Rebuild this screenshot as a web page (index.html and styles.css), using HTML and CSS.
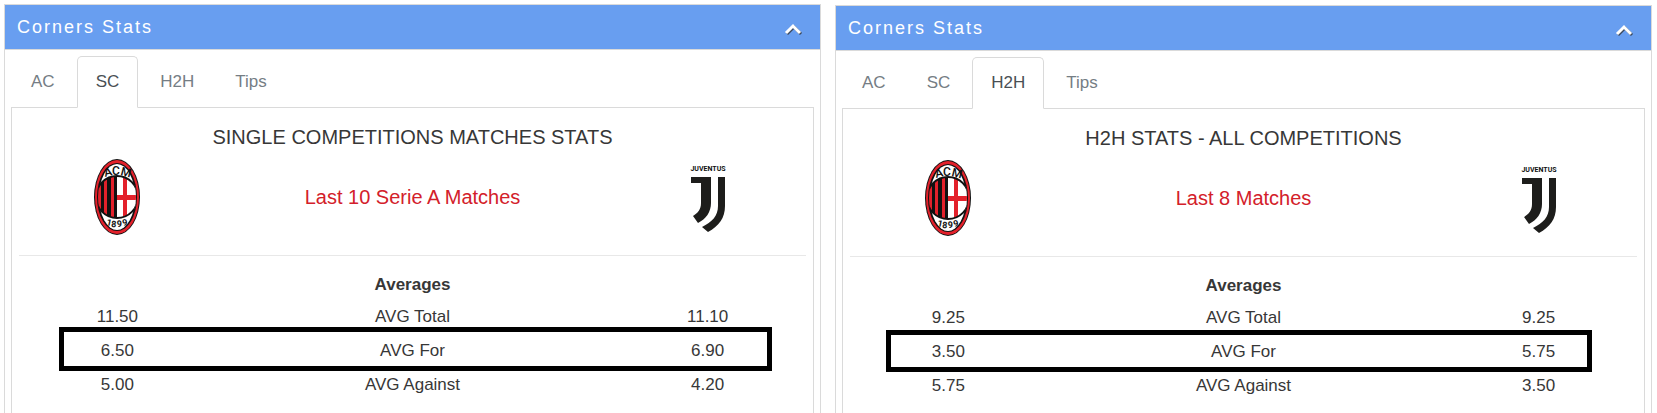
FILE: index.html
```
<!DOCTYPE html>
<html lang="en">
<head>
    <meta charset="UTF-8">
    <meta name="viewport" content="width=device-width, initial-scale=1.0">
    <title>Corners Stats</title>
    <link rel="stylesheet" href="styles.css">
</head>
<body>
    <main class="panels">
        <section class="panel">
            <header class="panel-header">
                <h2 class="panel-title">Corners Stats</h2>
                <button class="toggle" type="button" aria-label="Collapse">
                    <svg class="chevron" viewBox="0 0 20 14"><path class="chevron-shadow" d="M4 12L11 5L18 12"/><path d="M3 11L10 4L17 11"/></svg>
                </button>
            </header>
            <div class="panel-body">
                <nav class="tabs" role="tablist">
                    <button class="tab" type="button" role="tab">AC</button>
                    <button class="tab active" type="button" role="tab" aria-selected="true">SC</button>
                    <button class="tab" type="button" role="tab">H2H</button>
                    <button class="tab" type="button" role="tab">Tips</button>
                </nav>
                <div class="tab-content">
                    <h3 class="stats-title">SINGLE COMPETITIONS MATCHES STATS</h3>
                    <div class="teams">
                        <svg class="logo" viewBox="0 0 48 78" role="img" aria-label="AC Milan">
                            <clipPath id="shield"><ellipse cx="24" cy="39" rx="19" ry="34"/></clipPath>
                            <clipPath id="ball"><circle cx="24" cy="39" r="21"/></clipPath>
                            <g id="milan">
                                <ellipse cx="24" cy="39" rx="23" ry="38" fill="#111"/>
                                <ellipse cx="24" cy="39" rx="22" ry="37" fill="#e3212b"/>
                                <ellipse cx="24" cy="39" rx="20" ry="34" fill="#111"/>
                                <ellipse cx="24" cy="39" rx="18" ry="33" fill="#fff"/>
                                <g clip-path="url(#shield)">
                                    <g clip-path="url(#ball)">
                                        <rect x="4" y="18" width="20" height="42" fill="#e3212b"/>
                                        <path d="M8 18h3v42h-3zM14 18h4v42h-4zM21 18h3v42h-3z" fill="#111"/>
                                        <rect x="24" y="18" width="20" height="42" fill="#fff"/>
                                        <path d="M30 18h4v42h-4zM24 37h20v5h-20z" fill="#e3212b"/>
                                    </g>
                                    <circle cx="24" cy="39" r="21" fill="none" stroke="#111" stroke-width="2"/>
                                </g>
                                <text class="logo-acm" x="12 19 27" y="19 17 17" rotate="-14 0 14">ACM</text>
                                <text class="logo-year" x="13 18 24 30" y="67 69 69 68" rotate="12 4 -4 -12">1899</text>
                            </g>
                        </svg>
                        <p class="matches">Last 10 Serie A Matches</p>
                        <svg class="logo" viewBox="0 0 48 78" role="img" aria-label="Juventus">
                            <g id="juventus">
                                <text class="logo-juve" x="24" y="13">JUVENTUS</text>
                                <path d="M7 19h20v26c0 9-5 16-13 20l-5-7c5-3 8-7 8-13v-20h-10z" fill="#1d1d1b"/>
                                <path d="M34 19h7v29c0 12-6 20-17 26l-6-5c10-5 16-11 16-21z" fill="#1d1d1b"/>
                            </g>
                        </svg>
                    </div>
                    <div class="averages">
                        <table class="stats">
                            <colgroup><col class="team"><col><col class="team"></colgroup>
                            <thead>
                                <tr><th colspan="3">Averages</th></tr>
                            </thead>
                            <tbody>
                                <tr><td>11.50</td><td>AVG Total</td><td>11.10</td></tr>
                                <tr><td>6.50</td><td>AVG For</td><td>6.90</td></tr>
                                <tr><td>5.00</td><td>AVG Against</td><td>4.20</td></tr>
                            </tbody>
                        </table>
                        <div class="marker marker-sc"></div>
                    </div>
                </div>
            </div>
        </section>

        <section class="panel panel-h2h">
            <header class="panel-header">
                <h2 class="panel-title">Corners Stats</h2>
                <button class="toggle" type="button" aria-label="Collapse">
                    <svg class="chevron" viewBox="0 0 20 14"><path class="chevron-shadow" d="M4 12L11 5L18 12"/><path d="M3 11L10 4L17 11"/></svg>
                </button>
            </header>
            <div class="panel-body">
                <nav class="tabs" role="tablist">
                    <button class="tab" type="button" role="tab">AC</button>
                    <button class="tab" type="button" role="tab">SC</button>
                    <button class="tab active" type="button" role="tab" aria-selected="true">H2H</button>
                    <button class="tab" type="button" role="tab">Tips</button>
                </nav>
                <div class="tab-content">
                    <h3 class="stats-title">H2H STATS - ALL COMPETITIONS</h3>
                    <div class="teams">
                        <svg class="logo" viewBox="0 0 48 78" role="img" aria-label="AC Milan"><use href="#milan"/></svg>
                        <p class="matches">Last 8 Matches</p>
                        <svg class="logo" viewBox="0 0 48 78" role="img" aria-label="Juventus"><use href="#juventus"/></svg>
                    </div>
                    <div class="averages">
                        <table class="stats">
                            <colgroup><col class="team"><col><col class="team"></colgroup>
                            <thead>
                                <tr><th colspan="3">Averages</th></tr>
                            </thead>
                            <tbody>
                                <tr><td>9.25</td><td>AVG Total</td><td>9.25</td></tr>
                                <tr><td>3.50</td><td>AVG For</td><td>5.75</td></tr>
                                <tr><td>5.75</td><td>AVG Against</td><td>3.50</td></tr>
                            </tbody>
                        </table>
                        <div class="marker marker-h2h"></div>
                    </div>
                </div>
            </div>
        </section>
    </main>
</body>
</html>
```
FILE: styles.css
```
* {
    box-sizing: border-box;
}

body {
    margin: 0;
    background: #fff;
    color: #373737;
    font-family: "Liberation Sans", Arial, sans-serif;
    font-size: 17px;
}

.panels {
    display: grid;
    grid-template-columns: 1fr 1fr;
    gap: 14px;
    min-height: 100vh;
    padding: 4px 5px 0 4px;
}

.panel {
    display: flex;
    flex-direction: column;
    border: 1px solid #dadada;
    border-bottom: 0;
}

.panel-h2h {
    margin-top: 1px;
}

.panel-header {
    display: flex;
    align-items: center;
    justify-content: space-between;
    height: 45px;
    padding: 0 17px 0 12px;
    background: #689ef0;
    border-bottom: 1px solid #dadada;
}

.panel-title {
    margin: 0;
    color: #fff;
    font-size: 18px;
    font-weight: normal;
    letter-spacing: 2px;
}

.toggle {
    display: flex;
    padding: 4px 0 0;
    border: 0;
    background: none;
    cursor: pointer;
}

.chevron {
    width: 20px;
    height: 14px;
    fill: none;
    stroke: #fff;
    stroke-width: 3;
}

.chevron-shadow {
    stroke: #3c4a60;
}

.panel-body {
    display: flex;
    flex: 1;
    flex-direction: column;
    padding: 6px 6px 0;
}

/* tabs */
.tabs {
    display: flex;
    gap: 3px;
    padding-left: 1px;
    margin-bottom: -1px;
}

.tab {
    height: 52px;
    padding: 0 18px;
    border: 1px solid transparent;
    border-radius: 5px 5px 0 0;
    background: none;
    color: #757d84;
    font-family: inherit;
    font-size: 17px;
    cursor: pointer;
}

.tab.active {
    border-color: #dadada;
    border-bottom-color: #fff;
    background: #fff;
    color: #4a4f54;
    z-index: 1;
}

.tab-content {
    flex: 1;
    padding: 17px 7px 0;
    border: 1px solid #dadada;
    border-bottom: 0;
}

.stats-title {
    margin: 0;
    font-size: 20px;
    font-weight: normal;
    line-height: 24px;
    text-align: center;
}

.teams {
    display: grid;
    grid-template-columns: 1fr 2fr 1fr;
    align-items: center;
    justify-items: center;
    height: 107px;
    padding-bottom: 10px;
    border-bottom: 1px solid #e8e8e8;
}

.logo {
    width: 48px;
    height: 78px;
}

.logo-acm,
.logo-year,
.logo-juve {
    fill: #111;
    font-family: Roboto, "Liberation Sans", sans-serif;
    font-weight: bold;
}

.logo-acm {
    font-size: 12px;
    font-weight: 500;
}

.logo-year {
    font-size: 9px;
}

.logo-juve {
    font-size: 7px;
    text-anchor: middle;
}

.matches {
    margin: 0;
    color: #d3202a;
    font-size: 20px;
}

/* averages */
.averages {
    position: relative;
    padding-top: 13px;
}

.stats {
    width: 100%;
    table-layout: fixed;
    border-collapse: collapse;
    text-align: center;
}

.stats .team {
    width: 25%;
}

.stats th {
    height: 31px;
    padding: 0;
}

.stats td {
    height: 34px;
    padding: 0;
}

/* frame drawn over the AVG For row */
.marker {
    position: absolute;
    border: 5px solid #000;
}

.marker-sc {
    top: 71px;
    right: 34px;
    left: 40px;
    height: 44px;
}

.marker-h2h {
    top: 73px;
    right: 45px;
    left: 36px;
    height: 42px;
}
```
